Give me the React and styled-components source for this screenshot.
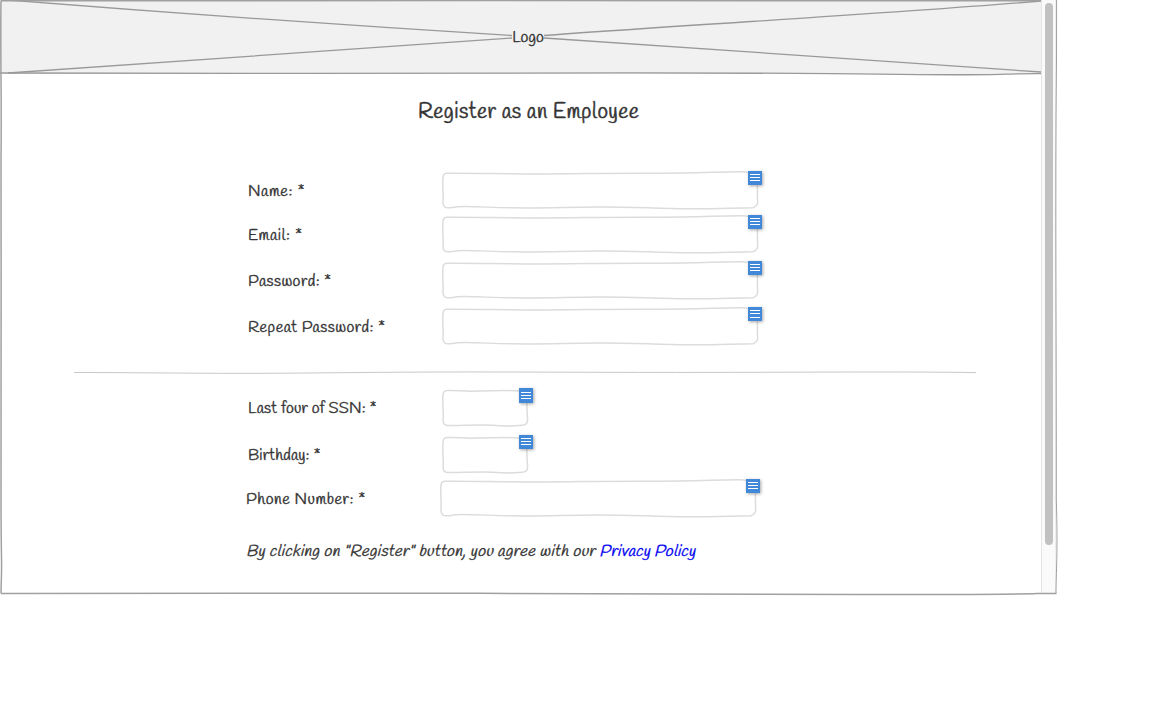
import React from "react";
import styled, { createGlobalStyle } from "styled-components";

const GlobalStyle = createGlobalStyle`
  * { box-sizing: border-box; }
  body {
    margin: 0;
    background: #fff;
    color: #333;
    font-family: "Handlee", "Neucha", "Lato", "Open Sans", sans-serif;
    -webkit-text-stroke: 0.35px currentColor;
  }
`;

const Browser = styled.div`
  position: relative;
  display: flex;
  width: 1058px;
  height: 596px;
`;

const Frame = styled.svg`
  position: absolute;
  inset: 0;
  width: 1060px;
  height: 598px;
  pointer-events: none;
  fill: none;
  stroke: #a0a0a0;
`;

const Page = styled.main`
  flex: 0 0 1041px;
  height: 593px;
  overflow: hidden;
`;

const Banner = styled.header`
  position: relative;
  display: flex;
  align-items: center;
  justify-content: center;
  height: 74px;
  background: #f1f1f1;
`;

const Sketch = styled.svg`
  position: absolute;
  inset: 0;
  width: 100%;
  height: 100%;
  overflow: visible;
  fill: none;
  stroke: ${(p) => p.$color || "#dcdcdc"};
  stroke-width: ${(p) => p.$weight || 1.5};
`;

const LogoText = styled.span`
  position: relative;
  margin: 2px 0 0 15px;
  background: #f1f1f1;
  font-size: 16px;
  line-height: 18px;
`;

const Title = styled.h1`
  margin: 25px 0 0 418px;
  font-size: 21.33px;
  line-height: 28px;
  font-weight: 500;
  white-space: nowrap;
  letter-spacing: 0.48px;
  -webkit-text-stroke-width: 0.5px;
`;

const Fields = styled.section`
  display: flex;
  flex-direction: column;
  padding-left: 248px;
  padding-top: ${(p) => p.$top}px;
`;

const Row = styled.label`
  display: grid;
  grid-template-columns: 194px auto;
  justify-content: start;
  align-items: start;
  height: 38px;
  margin-top: ${(p) => p.$gap || 0}px;
  margin-left: ${(p) => p.$shift || 0}px;
`;

const LabelText = styled.span`
  padding-top: ${(p) => p.$drop}px;
  font-size: 16px;
  line-height: 20px;
  white-space: pre;
  letter-spacing: ${(p) => p.$spacing || 0}px;
`;

const Box = styled.span`
  position: relative;
  width: ${(p) => p.$width}px;
  height: 38px;
`;

const Badge = styled.span`
  position: absolute;
  top: ${(p) => p.$top || 0}px;
  right: ${(p) => p.$right}px;
  display: flex;
  flex-direction: column;
  gap: 2px;
  width: 14px;
  height: ${(p) => p.$height || 14}px;
  padding: ${(p) => (p.$height ? 4 : 3)}px 2px 0;
  background: #4189d8;
  box-shadow: 1px 1px 3px rgba(0, 0, 0, 0.35);
`;

const Bar = styled.i`
  height: 1px;
  margin-top: ${(p) => p.$extra || 0}px;
  background: #fff;
`;

const Divider = styled.svg`
  display: block;
  width: 903px;
  height: 4px;
  margin: 25px 0 0 74px;
  fill: none;
  stroke: #c8c8c8;
`;

const Notice = styled.p`
  margin: 25px 0 0 246px;
  font-size: 16px;
  line-height: 20px;
  font-style: italic;
  white-space: nowrap;
  letter-spacing: 0.42px;
`;

const PolicyLink = styled.a`
  color: #0000f0;
  letter-spacing: 0.3px;
`;

const Track = styled.div`
  width: 15px;
  height: 593px;
  padding: 3px 3px 0;
  background: #fafafa;
  border-left: 1px solid #e4e4e4;
  border-right: 1px solid #eee;
`;

const Thumb = styled.div`
  width: 8px;
  height: 542px;
  border-radius: 4px;
  background: #c1c1c1;
`;

const WIDE =
  "M5 2.3 C30 2 65 3.1 100 3 S170 1.9 210 2.2 S280 .6 300 .8 Q316 1.5 315 8 C316 16 315 23 315.7 31 Q315.5 35 311 36.8 C292 37 270 38 248 37.8 C212 37.4 185 35.6 155 35.9 C120 36.3 95 37.3 72 36.8 C50 36.6 27 35 15 35.8 C10 36.4 7 37 4 36.5 Q1 35.5 1 31 C1.6 23 .2 17 1 6 Q1.3 2.5 5 2.3";
const SMALL =
  "M5 1.6 C15 1 22 2.7 34 2.1 C50 2 63 1 80 2 Q85.5 2.5 85 8 C84.5 15 85 22 85.6 31 Q85.5 36 80 36.3 C70 37.2 60 37 51 36.3 C34 35.6 20 36.8 6 36.6 Q1 36.5 1.2 31 C1.8 24 .2 16 1 6 Q1.2 1.8 5 1.6";

function Field({ label, spacing, drop = 11, gap, shift, small, badgeTop, badgeHeight, lastBar }) {
  return (
    <Row $gap={gap} $shift={shift}>
      <LabelText $spacing={spacing} $drop={drop}>
        {label}
      </LabelText>
      <Box $width={small ? 86 : 316}>
        <Sketch aria-hidden="true">
          <path d={small ? SMALL : WIDE} />
        </Sketch>
        <Badge $right={small ? -5 : -4} $top={badgeTop} $height={badgeHeight}>
          <Bar />
          <Bar />
          <Bar $extra={lastBar} />
        </Badge>
      </Box>
    </Row>
  );
}

export default function App() {
  return (
    <>
      <GlobalStyle />
      <Browser>
        <Page>
          <Banner>
            <Sketch $color="#999" $weight={1.3} aria-hidden="true">
              <path d="M8 0 C160 12 310 23 512 35.5 M544 35.5 C700 24 900 13 1041 1" />
              <path d="M8 73 C160 62 330 50 512 38 M544 38 C700 48 900 63 1041 72" />
              <path d="M0 73 C180 72.6 330 74 500 73.2 S760 72.8 900 74.3 S980 73.5 1041 73.7" />
            </Sketch>
            <LogoText>Logo</LogoText>
          </Banner>
          <Title>Register as an Employee</Title>
          <Fields $top={44}>
            <Field label="Name: *" spacing={0.7} />
            <Field label="Email: *" spacing={0.65} gap={6} />
            <Field label="Password: *" spacing={0.45} gap={8} />
            <Field label="Repeat Password: *" spacing={0.48} gap={8} lastBar={1} />
          </Fields>
          <Divider aria-hidden="true">
            <path d="M0 2.5 C60 2.5 130 3.6 190 3.3 S300 2.2 370 2 S540 2.6 640 2.4 S830 1.5 902 2.6" />
          </Divider>
          <Fields $top={15}>
            <Field label="Last four of SSN: *" spacing={0.18} drop={10} small badgeTop={-1} badgeHeight={15} />
            <Field label="Birthday: *" spacing={0.18} drop={10} small gap={9} badgeTop={-1} />
            <Field label="Phone Number: *" spacing={0.57} gap={5} shift={-2} />
          </Fields>
          <Notice>
            By clicking on "Register" button, you agree with our <PolicyLink>Privacy Policy</PolicyLink>
          </Notice>
        </Page>
        <Track>
          <Thumb />
        </Track>
        <Frame aria-hidden="true">
          <path
            strokeWidth="1.5"
            d="M1 .8 C180 1.5 300 .2 480 .6 S850 .3 1041 .8 M1 .5 C.2 60 1.8 90 1 160 C1.5 280 .4 430 1 510 S2 550 1 593.5"
          />
          <path
            strokeWidth="1.5"
            d="M1 593.4 C180 592.8 300 593.8 480 593.3 S790 594.8 930 594.5 S1020 593 1056.5 593.5"
          />
          <path d="M1056.6 0 L1056.5 60 C1055 200 1056.5 350 1056.3 500 C1058 550 1056 575 1056 593.5" />
        </Frame>
      </Browser>
    </>
  );
}
